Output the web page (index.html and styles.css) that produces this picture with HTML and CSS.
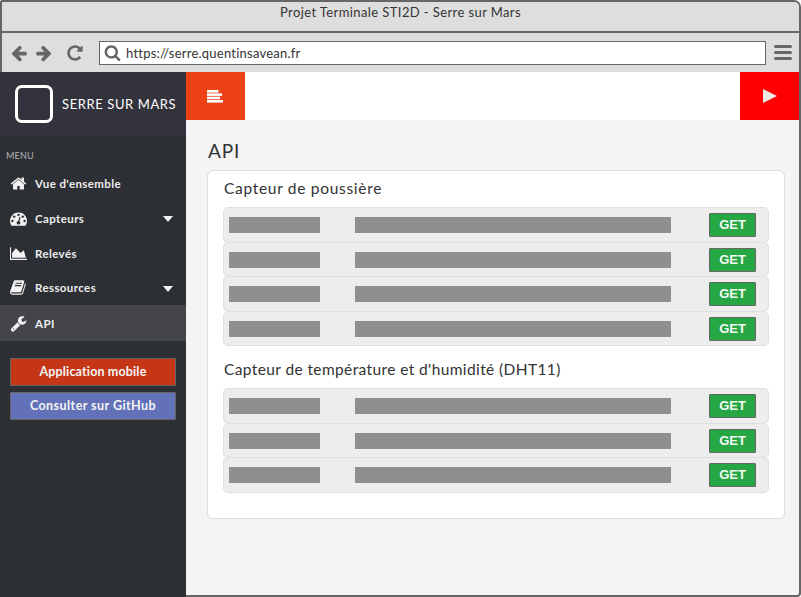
FILE: index.html
```html
<!DOCTYPE html>
<html lang="fr">
<head>
<meta charset="utf-8">
<title>Serre sur Mars</title>
<link rel="stylesheet" href="styles.css">
</head>
<body>
<div class="window">
  <div class="titlebar">Projet Terminale STI2D - Serre sur Mars</div>
  <div class="toolbar">
    <svg class="nav-icon" viewBox="0 0 1792 1792"><path d="M1664 896v128q0 53-32.5 90.5t-84.5 37.5h-704l293 294q38 36 38 90t-38 90l-75 76q-37 37-90 37-52 0-91-37l-651-652q-37-37-37-90 0-52 37-91l651-650q38-38 91-38 52 0 90 38l75 74q38 38 38 91t-38 91l-293 293h704q52 0 84.5 37.5t32.5 90.5z"/></svg>
    <svg class="nav-icon flip" viewBox="0 0 1792 1792"><path d="M1664 896v128q0 53-32.5 90.5t-84.5 37.5h-704l293 294q38 36 38 90t-38 90l-75 76q-37 37-90 37-52 0-91-37l-651-652q-37-37-37-90 0-52 37-91l651-650q38-38 91-38 52 0 90 38l75 74q38 38 38 91t-38 91l-293 293h704q52 0 84.5 37.5t32.5 90.5z"/></svg>
    <svg class="nav-icon reload" viewBox="0 0 1792 1792"><path d="M1664 256v448q0 26-19 45t-45 19h-448q-42 0-59-40-17-39 14-69l138-138q-148-137-349-137-104 0-198.5 40.5t-163.5 109.5-109.5 163.5-40.5 198.5 40.5 198.5 109.5 163.5 163.5 109.5 198.5 40.5q119 0 225-52t179-147q7-10 23-12 15 0 25 9l137 138q9 8 9.5 20.5t-7.5 22.5q-109 132-264 204.5t-327 72.5q-156 0-298-61t-245-164-164-245-61-298 61-298 164-245 245-164 298-61q147 0 284.5 55.5t244.5 156.5l130-129q29-31 70-14 39 17 39 59z"/></svg>
    <div class="address">
      <svg class="search" viewBox="0 0 1792 1792"><path d="M1216 832q0-185-131.5-316.5t-316.5-131.5-316.5 131.5-131.5 316.5 131.5 316.5 316.5 131.5 316.5-131.5 131.5-316.5zm512 832q0 52-38 90t-90 38q-54 0-90-38l-343-342q-179 124-399 124-143 0-273.5-55.5t-225-150-150-225-55.5-273.5 55.5-273.5 150-225 225-150 273.5-55.5 273.5 55.5 225 150 150 225 55.5 273.5q0 220-124 399l343 343q37 37 37 90z"/></svg>
      <span>https://serre.quentinsavean.fr</span>
    </div>
    <div class="burger"><i></i><i></i><i></i></div>
  </div>
  <div class="app">
    <aside class="sidebar">
      <div class="brand"><div class="logo"></div><span>SERRE SUR MARS</span></div>
      <div class="menu-label">MENU</div>
      <nav class="menu">
        <a class="item"><svg class="item-icon" viewBox="0 0 1792 1792"><path d="M1472 992v480q0 26-19 45t-45 19h-384v-384h-256v384h-384q-26 0-45-19t-19-45v-480q0-1 .5-3t.5-3l575-474 575 474q1 2 1 6zm223-69l-62 74q-8 9-21 11h-3q-13 0-21-7l-692-577-692 577q-12 8-24 7-13-2-21-11l-62-74q-8-10-7-23.5t11-21.5l719-599q32-26 76-26t76 26l244 204v-195q0-14 9-23t23-9h192q14 0 23 9t9 23v408l219 182q10 8 11 21.5t-7 23.5z"/></svg><span>Vue d'ensemble</span></a>
        <a class="item"><svg class="item-icon" viewBox="0 0 1792 1792"><path d="M384 1152q0-53-37.5-90.5t-90.5-37.5-90.5 37.5-37.5 90.5 37.5 90.5 90.5 37.5 90.5-37.5 37.5-90.5zm192-448q0-53-37.5-90.5t-90.5-37.5-90.5 37.5-37.5 90.5 37.5 90.5 90.5 37.5 90.5-37.5 37.5-90.5zm428 481l101-382q6-26-7.5-48.5t-38.5-29.5-48 6.5-30 39.5l-101 382q-60 5-107 43.5t-63 98.5q-20 77 20 146t117 89 146-20 89-117q16-60-6-117t-72-91zm660-33q0-53-37.5-90.5t-90.5-37.5-90.5 37.5-37.5 90.5 37.5 90.5 90.5 37.5 90.5-37.5 37.5-90.5zm-640-640q0-53-37.5-90.5t-90.5-37.5-90.5 37.5-37.5 90.5 37.5 90.5 90.5 37.5 90.5-37.5 37.5-90.5zm448 192q0-53-37.5-90.5t-90.5-37.5-90.5 37.5-37.5 90.5 37.5 90.5 90.5 37.5 90.5-37.5 37.5-90.5zm320 448q0 261-141 483-19 29-54 29h-1402q-35 0-54-29-141-221-141-483 0-182 71-348t191-286 286-191 348-71 348 71 286 191 191 286 71 348z"/></svg><span>Capteurs</span><b class="caret"></b></a>
        <a class="item"><svg class="item-icon" viewBox="0 0 2048 1792"><path d="M2048 1536v128h-2048v-1536h128v1408h1920zm-384-1024l256 896h-1664v-576l448-576 576 576z"/></svg><span>Relevés</span></a>
        <a class="item"><svg class="item-icon" viewBox="0 0 1792 1792"><path d="M1639 478q40 57 18 129l-275 906q-19 64-76.5 107.5t-122.5 43.5h-923q-77 0-148.5-53.5t-99.5-131.5q-24-67-2-127 0-4 3-27t4-37q1-8-3-21.5t-3-19.5q2-11 8-21t16.5-23.5 16.5-23.5q23-38 45-91.5t30-91.5q3-10 .5-30t-.5-28q3-11 17-28t17-23q21-36 42-92t25-90q1-9-2.5-32t.5-28q4-13 22-30.5t22-22.5q19-26 42.5-84.5t27.5-96.5q1-8-3-25.5t-2-26.5q2-8 9-18t18-23 17-21q8-12 16.5-30.5t15-35 16-36 19.5-32 26.5-23.5 36-11.5 47.5 5.5l-1 3q38-9 51-9h761q74 0 114 56t18 130l-274 906q-36 119-71.5 153.5t-128.5 34.5h-869q-27 0-38 15-11 16-1 43 24 70 144 70h923q29 0 56-15.5t35-41.5l300-987q7-22 5-57 38 15 59 43zm-1064 2q-4 13 2 22.5t20 9.5h608q13 0 25.5-9.5t16.5-22.5l21-64q4-13-2-22.5t-20-9.5h-608q-13 0-25.5 9.5t-16.5 22.5zm-83 256q-4 13 2 22.5t20 9.5h608q13 0 25.5-9.5t16.5-22.5l21-64q4-13-2-22.5t-20-9.5h-608q-13 0-25.5 9.5t-16.5 22.5z"/></svg><span>Ressources</span><b class="caret"></b></a>
        <a class="item active"><svg class="item-icon" viewBox="0 0 1792 1792"><path d="M448 1472q0-26-19-45t-45-19-45 19-19 45 19 45 45 19 45-19 19-45zm644-420l-682 682q-37 37-90 37-52 0-91-37l-106-108q-38-36-38-90 0-53 38-91l681-681q39 98 114.5 173.5t173.5 114.5zm634-435q0 39-23 106-47 134-164.5 217.5t-258.5 83.5q-185 0-316.5-131.5t-131.5-316.5 131.5-316.5 316.5-131.5q58 0 121.5 16.5t107.5 46.5q16 11 16 28t-16 28l-293 169v224l193 107q5-3 79-48.5t135.5-81 70.5-35.5q15 0 23.5 10t8.5 25z"/></svg><span>API</span></a>
      </nav>
      <div class="side-actions">
        <a class="side-btn red">Application mobile</a>
        <a class="side-btn blue">Consulter sur GitHub</a>
      </div>
    </aside>
    <main class="main">
      <header class="topbar">
        <div class="toggle"><svg class="toggle-icon" viewBox="0 0 16 13"><rect width="11.5" height="2.6"/><rect y="3.33" width="15" height="2.6"/><rect y="6.67" width="13" height="2.6"/><rect y="10" width="16" height="2.6"/></svg></div>
        <div class="play"><b></b></div>
      </header>
      <section class="content">
        <h1>API</h1>
        <div class="card">
          <h2>Capteur de poussière</h2>
          <div class="rows">
            <div class="row"><i class="bar short"></i><i class="bar long"></i><a class="get">GET</a></div>
            <div class="row"><i class="bar short"></i><i class="bar long"></i><a class="get">GET</a></div>
            <div class="row"><i class="bar short"></i><i class="bar long"></i><a class="get">GET</a></div>
            <div class="row"><i class="bar short"></i><i class="bar long"></i><a class="get">GET</a></div>
          </div>
          <h2 class="second">Capteur de température et d'humidité (DHT11)</h2>
          <div class="rows">
            <div class="row"><i class="bar short"></i><i class="bar long"></i><a class="get">GET</a></div>
            <div class="row"><i class="bar short"></i><i class="bar long"></i><a class="get">GET</a></div>
            <div class="row"><i class="bar short"></i><i class="bar long"></i><a class="get">GET</a></div>
          </div>
        </div>
      </section>
    </main>
  </div>
</div>
</body>
</html>
```
FILE: styles.css
```css
* { box-sizing: border-box; }
html, body { margin: 0; padding: 0; }
body { width: 801px; height: 597px; overflow: hidden; font-family: "Lato", "Liberation Sans", sans-serif; }
.window { width: 801px; height: 597px; border: 2px solid #666; border-radius: 2px 7px 4px 0; display: flex; flex-direction: column; background: #f4f4f4; }
.titlebar { height: 31px; flex: none; background: #dedede; border-radius: 0 5px 0 0; border-bottom: 2px solid #666; text-align: center; font-size: 13px; line-height: 21px; letter-spacing: .4px; color: #333; }
.toolbar { height: 39px; flex: none; background: #dedede; display: flex; align-items: center; padding: 0 8px; }
.nav-icon { width: 18px; height: 18px; fill: #666; margin-right: 7px; flex: none; }
.nav-icon.flip { transform: scaleX(-1); }
.nav-icon.reload { margin-left: 6px; margin-right: 0; }
.address { width: 667px; height: 24px; margin-left: 15px; background: #fff; border: 1px solid #666; display: flex; align-items: center; padding-left: 4px; font-size: 13px; letter-spacing: .23px; color: #333; flex: none; }
.search { width: 17px; height: 17px; fill: #666; margin-right: 5px; flex: none; }
.burger { width: 18px; margin-left: 8px; display: flex; flex-direction: column; gap: 3px; flex: none; }
.burger i { display: block; height: 3px; border-radius: 2px; background: #666; }
.app { flex: 1; display: flex; min-height: 0; margin-left: -2px; }
.sidebar { width: 186px; flex: none; margin-bottom: -2px; background: #2c2f33; color: #fff; display: flex; flex-direction: column; }
.brand { height: 64px; flex: none; background: #32333c; display: flex; align-items: center; padding-left: 15px; font-size: 13px; letter-spacing: .6px; }
.logo { width: 38px; height: 38px; border: 3px solid #fff; border-radius: 7px; margin-right: 9px; flex: none; }
.menu-label { height: 30px; flex: none; padding: 14px 0 0 6px; font-size: 9px; line-height: 11px; color: #b4b5b7; letter-spacing: .2px; }
.menu { display: flex; flex-direction: column; }
.item { height: 35px; display: flex; align-items: center; padding-left: 10px; font-size: 11.5px; font-weight: 700; color: #ecedee; letter-spacing: .4px; position: relative; }
.item:nth-child(4) { height: 34px; padding-bottom: 1px; }
.item.active { height: 36px; background: #43454a; }
.item-icon { width: 17px; height: 17px; fill: #f2f2f2; margin-right: 8px; flex: none; }
.caret { position: absolute; left: 163px; top: 15px; border: 5.5px solid transparent; border-top: 6px solid #f2f2f2; border-bottom: 0; }
.side-actions { padding: 17px 10px 0; display: flex; flex-direction: column; gap: 6px; }
.side-btn { height: 28px; padding-bottom: 2px; display: flex; align-items: center; justify-content: center; border: 1px solid #666; border-radius: 1px; font-size: 12.5px; font-weight: 700; color: #f4f4f4; letter-spacing: .15px; }
.side-btn.blue { letter-spacing: .45px; }
.red { background: #c53616; }
.blue { background: #6372b8; }
.main { flex: 1; min-width: 0; display: flex; flex-direction: column; }
.topbar { height: 48px; flex: none; background: #fff; display: flex; justify-content: space-between; }
.toggle { width: 59px; background: #ec4215; display: flex; align-items: center; padding-left: 21px; }
.toggle-icon { width: 16px; height: 13px; fill: #fff; display: block; }
.play { width: 59px; background: #f00; display: flex; align-items: center; justify-content: center; }
.play b { display: block; border-left: 14px solid #f0e8e8; border-top: 7px solid transparent; border-bottom: 7px solid transparent; }
.content { flex: 1; padding: 20px 14px 0 21px; }
h1 { margin: 0 0 8px 1px; font-size: 19px; line-height: 22px; font-weight: 400; letter-spacing: .9px; color: #333; height: 22px; }
.card { height: 349px; background: #fff; border: 1px solid #ddd; border-radius: 6px; padding: 0 15px; }
h2 { margin: 0; height: 36px; padding: 8px 0 0 1px; font-size: 15.5px; line-height: 18px; font-weight: 400; letter-spacing: .7px; color: #333; }
h2.second { height: 42px; padding-top: 14px; letter-spacing: .39px; }
.rows { display: flex; flex-direction: column; }
.row { height: 35.5px; margin-bottom: -1px; flex: none; background: #ededed; border: 1px solid #e0e0e0; border-radius: 5px; display: flex; align-items: flex-start; padding: 9px 12px 0 5px; }
.rows .row:last-child { margin-bottom: 0; }
.bar { display: block; height: 16px; background: #8f8f8f; flex: none; }
.short { width: 91px; margin-right: 35px; }
.long { width: 316px; }
.get { margin-left: auto; margin-top: -4px; width: 47px; height: 24px; flex: none; background: #27a644; border: 1px solid #666; border-radius: 1px; color: #f2fbf4; font: 700 13px/21px "Liberation Sans", sans-serif; text-align: center; }
```
